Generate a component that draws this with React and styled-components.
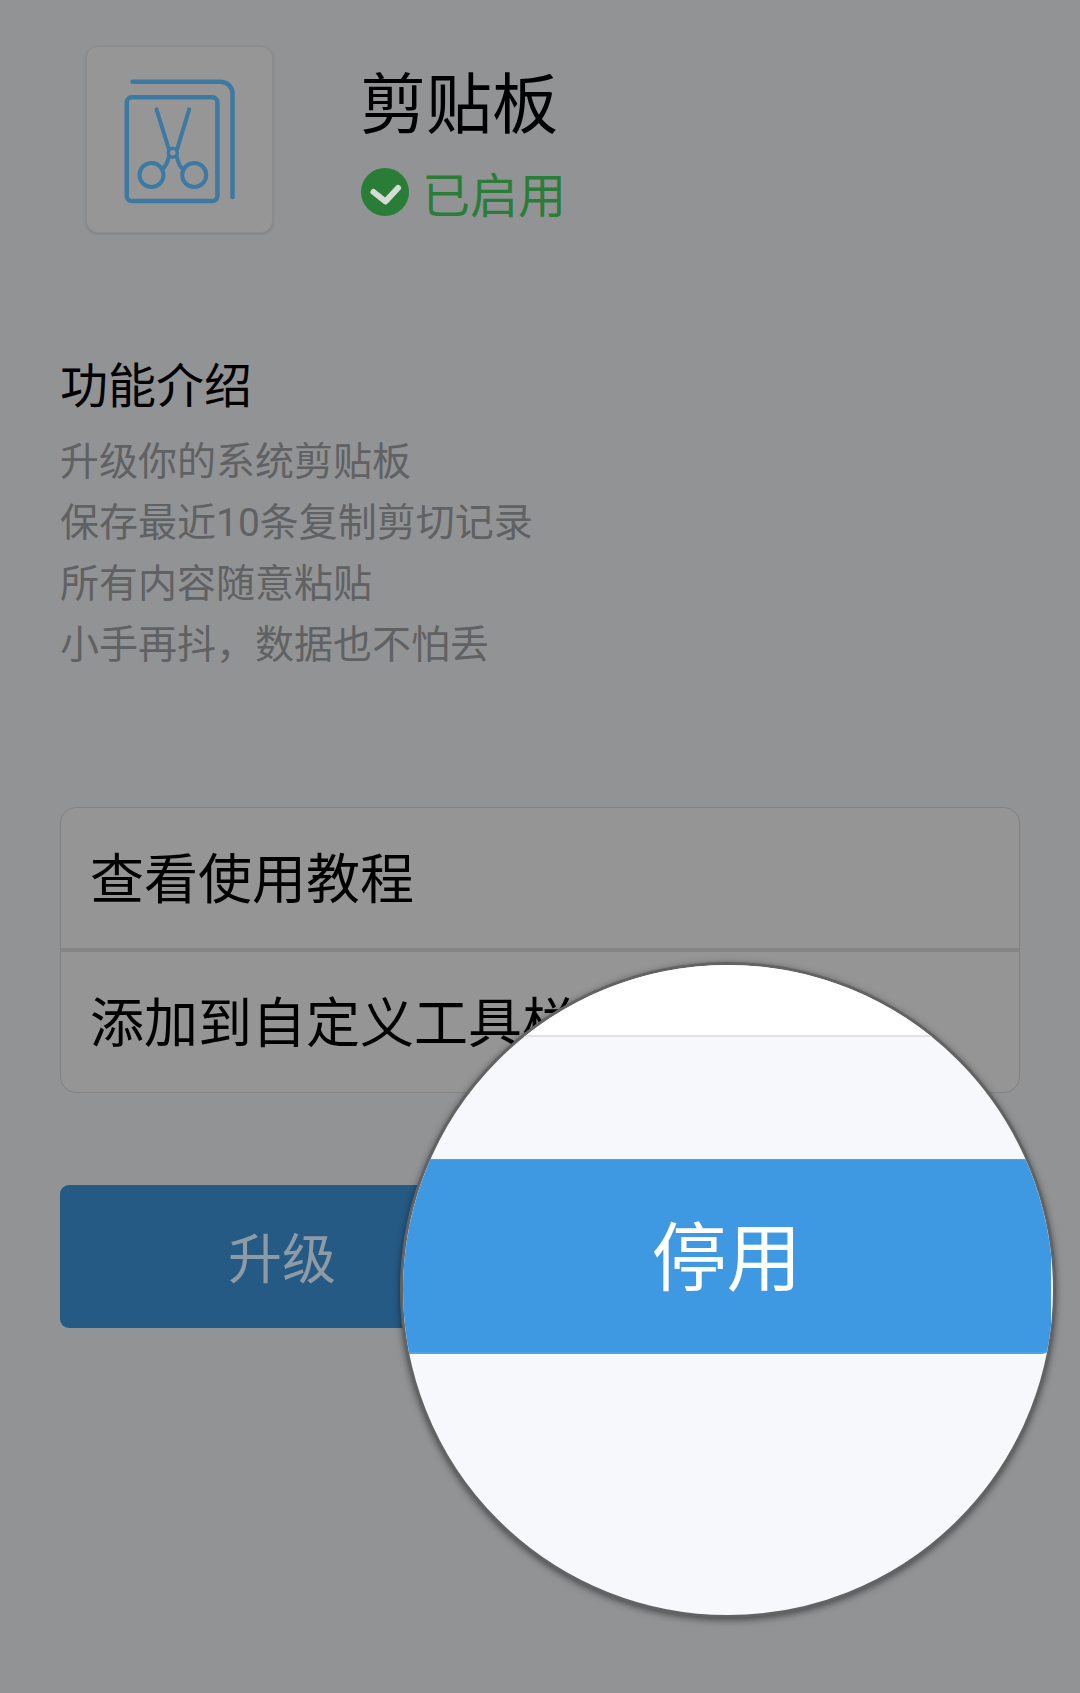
import React from 'react';
import styled, { createGlobalStyle } from 'styled-components';

const GlobalStyle = createGlobalStyle`
  html, body {
    margin: 0;
    padding: 0;
    background: #929395;
  }

  body {
    font-family: Roboto, "Noto Sans CJK SC", sans-serif;
  }
`;

const Page = styled.div`
  position: relative;
  box-sizing: border-box;
  width: 1080px;
  height: 1693px;
  padding: 46px 60px 0;
  overflow: hidden;
  background: #929395;
`;

const Header = styled.header`
  display: flex;
  padding-left: 26px;
`;

const Tile = styled.div`
  box-sizing: border-box;
  display: flex;
  align-items: center;
  justify-content: center;
  width: 187px;
  height: 187px;
  padding-top: 5px;
  background: #969697;
  border: 1px solid #8c8c8d;
  border-radius: 12px;
  box-shadow: 0 1px 3px rgba(0, 0, 0, 0.14);
`;

const Info = styled.div`
  display: flex;
  flex-direction: column;
  margin-left: 87px;
  padding-top: 20px;
`;

const Title = styled.h1`
  margin: 0;
  font-size: 66px;
  font-weight: 400;
  line-height: 80px;
  color: #000;
`;

const Status = styled.div`
  display: flex;
  align-items: center;
  gap: 13px;
  height: 48px;
  margin-top: 22px;
  padding-left: 1px;
  font-size: 48px;
  color: #2a7d37;
`;

const Section = styled.section`
  margin-top: 124px;
`;

const SectionTitle = styled.h2`
  margin: 0 0 15px;
  font-size: 48px;
  font-weight: 400;
  line-height: 60px;
  color: #000;
`;

const Line = styled.p`
  margin: 0;
  font-size: 39px;
  line-height: 61px;
  color: #606162;
`;

const Panel = styled.div`
  box-sizing: border-box;
  display: flex;
  flex-direction: column;
  height: 286px;
  margin-top: 131px;
  background: #959595;
  border: 1px solid #828283;
  border-radius: 16px;
`;

const Row = styled.div`
  display: flex;
  flex: 1;
  align-items: center;
  box-sizing: border-box;
  padding: 0 0 6px 29px;
  font-size: 54px;
  color: #000;

  & + & {
    flex: none;
    height: 144px;
    border-top: 4px solid #858585;
  }
`;

const DimButton = styled.div`
  display: flex;
  align-items: center;
  justify-content: center;
  box-sizing: border-box;
  width: 444px;
  height: 143px;
  margin-top: 92px;
  padding-bottom: 3px;
  background: #255a85;
  border-radius: 9px;
  font-size: 54px;
  color: #8e9ba5;
`;

// round magnifier sitting over the lower right of the page
const Lens = styled.div`
  position: absolute;
  left: 400px;
  top: 962px;
  box-sizing: border-box;
  width: 656px;
  height: 656px;
  overflow: hidden;
  background: #f6f8fc;
  border: 3px solid #636364;
  border-radius: 50%;
  box-shadow: 0 2px 7px rgba(0, 0, 0, 0.5);
`;

const LensTop = styled.div`
  height: 70px;
  background: #fff;
  border-bottom: 2px solid #e2e3e6;
`;

const LensButton = styled.div`
  display: flex;
  align-items: center;
  justify-content: center;
  box-sizing: border-box;
  height: 195px;
  margin: 122px 2px 0 -4px;
  padding: 0 0 7px 3px;
  background: #3f99e2;
  border-top: 1px solid #4ba3ea;
  border-bottom: 2px solid #4ba3ea;
  border-radius: 0 0 9px 0;
  font-size: 75px;
  color: #fff;
`;

const ScissorsIcon = () => (
  <svg width="112" height="128" viewBox="0 0 112 128" fill="none" stroke="#3d7aa3" strokeWidth="4" strokeLinecap="round">
    <path d="M8.5 3.7H96.5A12 12 0 0 1 108.5 15.7V119" strokeWidth="4.5" />
    <rect x="2.8" y="19.3" width="90.6" height="103.7" rx="5" strokeWidth="4.5" />
    <path d="M32.5 31.3L44.8 71M65.2 31.3L53.2 71" />
    <circle cx="48.8" cy="74.7" r="4.5" strokeWidth="3.5" />
    <path d="M44.8 79C43.5 85 41 89 38 91.5M53 79C54 85 56 89 59.5 91.5" />
    <circle cx="27.5" cy="97" r="12" />
    <circle cx="70.2" cy="97" r="12" />
  </svg>
);

const CheckBadge = () => (
  <svg width="48" height="48" viewBox="0 0 48 48">
    <circle cx="24" cy="24" r="24" fill="#2a7d37" />
    <path d="M12.5 24L24.5 33.5L37 20" fill="none" stroke="#d5dcd6" strokeWidth="6" strokeLinecap="round" strokeLinejoin="round" />
  </svg>
);

const intro = [
  '升级你的系统剪贴板',
  '保存最近10条复制剪切记录',
  '所有内容随意粘贴',
  '小手再抖，数据也不怕丢',
];

const App = () => (
  <Page>
    <GlobalStyle />
    <Header>
      <Tile>
        <ScissorsIcon />
      </Tile>
      <Info>
        <Title>剪贴板</Title>
        <Status>
          <CheckBadge />
          <span>已启用</span>
        </Status>
      </Info>
    </Header>

    <Section>
      <SectionTitle>功能介绍</SectionTitle>
      {intro.map(line => (
        <Line key={line}>{line}</Line>
      ))}
    </Section>

    <Panel>
      <Row>查看使用教程</Row>
      <Row>添加到自定义工具栏</Row>
    </Panel>

    <DimButton>升级</DimButton>

    <Lens>
      <LensTop />
      <LensButton>停用</LensButton>
    </Lens>
  </Page>
);

export default App;
